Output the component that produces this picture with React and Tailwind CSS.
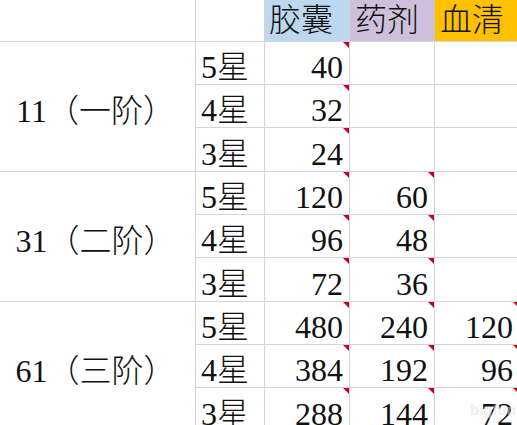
import React from "react";

const groups = [
  { label: "11（一阶）", rows: [["5星", "40", "", ""], ["4星", "32", "", ""], ["3星", "24", "", ""]] },
  { label: "31（二阶）", rows: [["5星", "120", "60", ""], ["4星", "96", "48", ""], ["3星", "72", "36", ""]] },
  { label: "61（三阶）", rows: [["5星", "480", "240", "120"], ["4星", "384", "192", "96"], ["3星", "288", "144", "72"]] },
];

const font = { fontFamily: '"Liberation Serif", "Noto Sans CJK SC", serif' };

function Flag() {
  return (
    <span className="absolute top-0 right-0 w-0 h-0 border-l-[6px] border-l-transparent border-t-[6px] border-t-[#c8001e]" />
  );
}

function NumCell({ value }) {
  return (
    <div className="relative flex items-end justify-end pr-[6px] pb-[1px] border-r border-b border-[#d4d4d8]">
      {value && <Flag />}
      <span className="leading-none">{value}</span>
    </div>
  );
}

export default function App() {
  return (
    <div className="w-[517px] h-[425px] overflow-hidden bg-white text-[#111] text-[32px] font-light" style={font}>
      <div className="relative grid w-[520px] grid-cols-[196px_69px_85px_85px_85px] grid-rows-[42px_43px_43px_44px_43px_43px_44px_43px_43px_44px]">
        <div className="border-r border-b border-[#d4d4d8]" />
        <div className="border-r border-b border-[#d4d4d8]" />
        <div className="flex items-end pl-[4px] pb-[5px] bg-[#bdd7ee] border-b border-[#d4d4d8]"><span className="leading-none">胶囊</span></div>
        <div className="flex items-end pl-[5px] pb-[5px] bg-[#ccc0da] border-b border-[#d4d4d8]"><span className="leading-none">药剂</span></div>
        <div className="flex items-end pl-[5px] pb-[5px] bg-[#ffc000] border-b border-[#d4d4d8]"><span className="leading-none">血清</span></div>

        {groups.map((g) => (
          <React.Fragment key={g.label}>
            <div className="row-span-3 flex items-center justify-center pr-[4px] pt-[8px] border-r border-b border-[#d4d4d8]">
              <span className="leading-none whitespace-nowrap">{g.label}</span>
            </div>
            {g.rows.map((r) => (
              <React.Fragment key={g.label + r[0]}>
                <div className="flex items-end pl-[5px] pb-[1px] border-r border-b border-[#d4d4d8]">
                  <span className="leading-none">{r[0]}</span>
                </div>
                <NumCell value={r[1]} />
                <NumCell value={r[2]} />
                <NumCell value={r[3]} />
              </React.Fragment>
            ))}
          </React.Fragment>
        ))}

        {/* faint watermark */}
        <span
          className="absolute left-[470px] top-[402px] text-[15px] font-bold leading-none text-[#e2e2e2] opacity-50 pointer-events-none"
          style={{ fontFamily: '"Liberation Sans", sans-serif' }}
        >
          bigfun
        </span>
      </div>
    </div>
  );
}
